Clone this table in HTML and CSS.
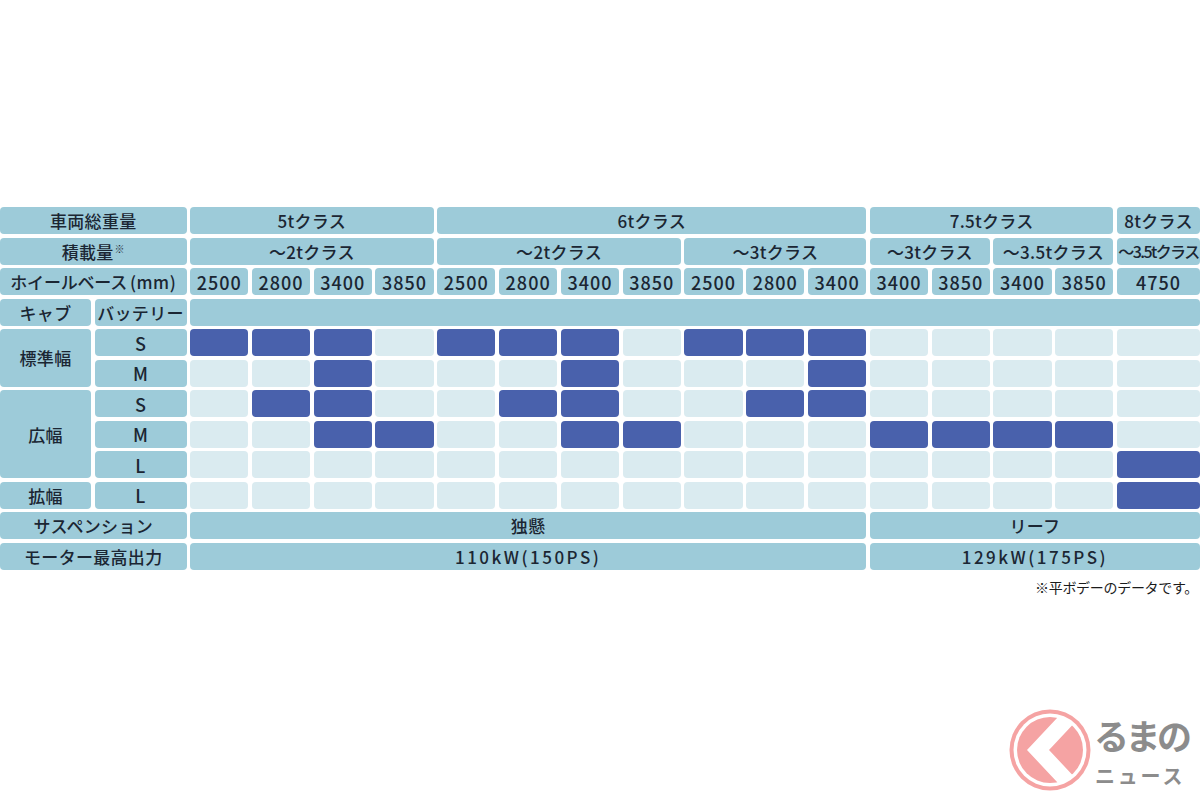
FILE: index.html
```html
<!DOCTYPE html>
<html lang="ja">
<head>
<meta charset="utf-8">
<title>スペック表</title>
<link rel="stylesheet" href="styles.css">
</head>
<body>
<div class="page">
  <div class="spec">
    <!-- row 1 -->
    <div class="c h s2">車両総重量</div>
    <div class="c h s4">5tクラス</div>
    <div class="c h s7">6tクラス</div>
    <div class="c h s4">7.5tクラス</div>
    <div class="c h">8tクラス</div>
    <!-- row 2 -->
    <div class="c h s2">積載量<sup class="note-mark">※</sup></div>
    <div class="c h s4">～2tクラス</div>
    <div class="c h s4">～2tクラス</div>
    <div class="c h s3">～3tクラス</div>
    <div class="c h s2">～3tクラス</div>
    <div class="c h s2">～3.5tクラス</div>
    <div class="c h narrow">～3.5tクラス</div>
    <!-- row 3 -->
    <div class="c h s2 tight">ホイールベース<span class="paren">(mm)</span></div>
    <div class="c h num">2500</div><div class="c h num">2800</div><div class="c h num">3400</div><div class="c h num">3850</div>
    <div class="c h num">2500</div><div class="c h num">2800</div><div class="c h num">3400</div><div class="c h num">3850</div>
    <div class="c h num">2500</div><div class="c h num">2800</div><div class="c h num">3400</div>
    <div class="c h num">3400</div><div class="c h num">3850</div><div class="c h num">3400</div><div class="c h num">3850</div>
    <div class="c h num">4750</div>
    <!-- row 4 -->
    <div class="c h">キャブ</div>
    <div class="c h">バッテリー</div>
    <div class="c h s16"></div>
    <!-- 標準幅 S -->
    <div class="c h r2">標準幅</div>
    <div class="c h lat">S</div>
    <div class="c f"></div><div class="c f"></div><div class="c f"></div><div class="c e"></div>
    <div class="c f"></div><div class="c f"></div><div class="c f"></div><div class="c e"></div>
    <div class="c f"></div><div class="c f"></div><div class="c f"></div>
    <div class="c e"></div><div class="c e"></div><div class="c e"></div><div class="c e"></div>
    <div class="c e"></div>
    <!-- 標準幅 M -->
    <div class="c h lat">M</div>
    <div class="c e"></div><div class="c e"></div><div class="c f"></div><div class="c e"></div>
    <div class="c e"></div><div class="c e"></div><div class="c f"></div><div class="c e"></div>
    <div class="c e"></div><div class="c e"></div><div class="c f"></div>
    <div class="c e"></div><div class="c e"></div><div class="c e"></div><div class="c e"></div>
    <div class="c e"></div>
    <!-- 広幅 S -->
    <div class="c h r3">広幅</div>
    <div class="c h lat">S</div>
    <div class="c e"></div><div class="c f"></div><div class="c f"></div><div class="c e"></div>
    <div class="c e"></div><div class="c f"></div><div class="c f"></div><div class="c e"></div>
    <div class="c e"></div><div class="c f"></div><div class="c f"></div>
    <div class="c e"></div><div class="c e"></div><div class="c e"></div><div class="c e"></div>
    <div class="c e"></div>
    <!-- 広幅 M -->
    <div class="c h lat">M</div>
    <div class="c e"></div><div class="c e"></div><div class="c f"></div><div class="c f"></div>
    <div class="c e"></div><div class="c e"></div><div class="c f"></div><div class="c f"></div>
    <div class="c e"></div><div class="c e"></div><div class="c e"></div>
    <div class="c f"></div><div class="c f"></div><div class="c f"></div><div class="c f"></div>
    <div class="c e"></div>
    <!-- 広幅 L -->
    <div class="c h lat">L</div>
    <div class="c e"></div><div class="c e"></div><div class="c e"></div><div class="c e"></div>
    <div class="c e"></div><div class="c e"></div><div class="c e"></div><div class="c e"></div>
    <div class="c e"></div><div class="c e"></div><div class="c e"></div>
    <div class="c e"></div><div class="c e"></div><div class="c e"></div><div class="c e"></div>
    <div class="c f"></div>
    <!-- 拡幅 L -->
    <div class="c h">拡幅</div>
    <div class="c h lat">L</div>
    <div class="c e"></div><div class="c e"></div><div class="c e"></div><div class="c e"></div>
    <div class="c e"></div><div class="c e"></div><div class="c e"></div><div class="c e"></div>
    <div class="c e"></div><div class="c e"></div><div class="c e"></div>
    <div class="c e"></div><div class="c e"></div><div class="c e"></div><div class="c e"></div>
    <div class="c f"></div>
    <!-- サスペンション -->
    <div class="c h s2">サスペンション</div>
    <div class="c h s11">独懸</div>
    <div class="c h s5">リーフ</div>
    <!-- モーター -->
    <div class="c h s2">モーター最高出力</div>
    <div class="c h s11 wide">110kW(150PS)</div>
    <div class="c h s5 wide">129kW(175PS)</div>
  </div>
  <p class="footnote">※平ボデーのデータです。</p>
</div>

<div class="logo">
  <svg class="logo-mark" width="82" height="82" viewBox="0 0 82 82">
    <defs>
      <clipPath id="disc"><circle cx="41" cy="41" r="35"/></clipPath>
    </defs>
    <circle cx="41" cy="41" r="40.5" fill="#f5a3a3"/>
    <circle cx="41" cy="41" r="36.5" fill="#ffffff"/>
    <circle cx="41" cy="41" r="33" fill="#f5a3a3"/>
    <polygon clip-path="url(#disc)" points="18,41 64,-8 86,-8 40,41 86,90 64,90" fill="#ffffff"/>
  </svg>
  <div class="logo-text">
    <span class="logo-top">るまの</span>
    <span class="logo-bottom">ニュース</span>
  </div>
</div>
</body>
</html>
```

FILE: styles.css
```css
* { box-sizing: border-box; }

html, body {
  margin: 0;
  padding: 0;
  background: #ffffff;
}

body {
  width: 1200px;
  height: 800px;
  overflow: hidden;
  position: relative;
  font-family: "Noto Sans CJK JP", "Noto Sans", sans-serif;
  color: #1b2633;
}

.page {
  padding-top: 207px;
}

.spec {
  display: grid;
  width: 1200px;
  grid-template-columns: 91px 92px repeat(15, 1fr) 83px;
  grid-auto-rows: 27px;
  gap: 3.5px;
}

.c {
  border-radius: 4px;
  display: flex;
  align-items: center;
  justify-content: center;
  font-size: 17px;
  font-weight: 500;
  line-height: 1;
  letter-spacing: 0.3px;
  white-space: nowrap;
}

.h { background: #9dcbd9; }
.e { background: #daebf0; }
.f { background: #4961ac; }

.s2 { grid-column: span 2; }
.s3 { grid-column: span 3; }
.s4 { grid-column: span 4; }
.s5 { grid-column: span 5; }
.s7 { grid-column: span 7; }
.s11 { grid-column: span 11; }
.s16 { grid-column: span 16; }
.r2 { grid-row: span 2; }
.r3 { grid-row: span 3; }

.num {
  font-size: 18px;
  letter-spacing: 1px;
}

.lat {
  font-size: 18px;
}

.wide {
  font-size: 17px;
  letter-spacing: 2.5px;
}

.tight {
  letter-spacing: -0.2px;
}

.paren {
  margin-left: 3px;
  letter-spacing: 0.5px;
}

.narrow {
  font-size: 16px;
  letter-spacing: -1.6px;
}

.note-mark {
  font-size: 10px;
  vertical-align: top;
  margin-top: -4px;
  margin-left: 1px;
}

.footnote {
  margin: 7px 2px 0 0;
  text-align: right;
  font-size: 14px;
  font-weight: 400;
  color: #1b1b1b;
  letter-spacing: -0.3px;
}

.logo {
  position: absolute;
  left: 1009px;
  top: 709px;
  display: flex;
  align-items: flex-start;
  gap: 3px;
}

.logo-mark { display: block; }

.logo-text {
  display: flex;
  flex-direction: column;
  align-items: flex-start;
  color: #8c8c8c;
  font-weight: 700;
  padding-top: 1px;
}

.logo-top {
  display: block;
  font-size: 35px;
  line-height: 1.45;
  letter-spacing: -3.5px;
}

.logo-bottom {
  display: block;
  font-size: 20px;
  line-height: 1.45;
  letter-spacing: 2.8px;
  margin-left: 1px;
}
```
